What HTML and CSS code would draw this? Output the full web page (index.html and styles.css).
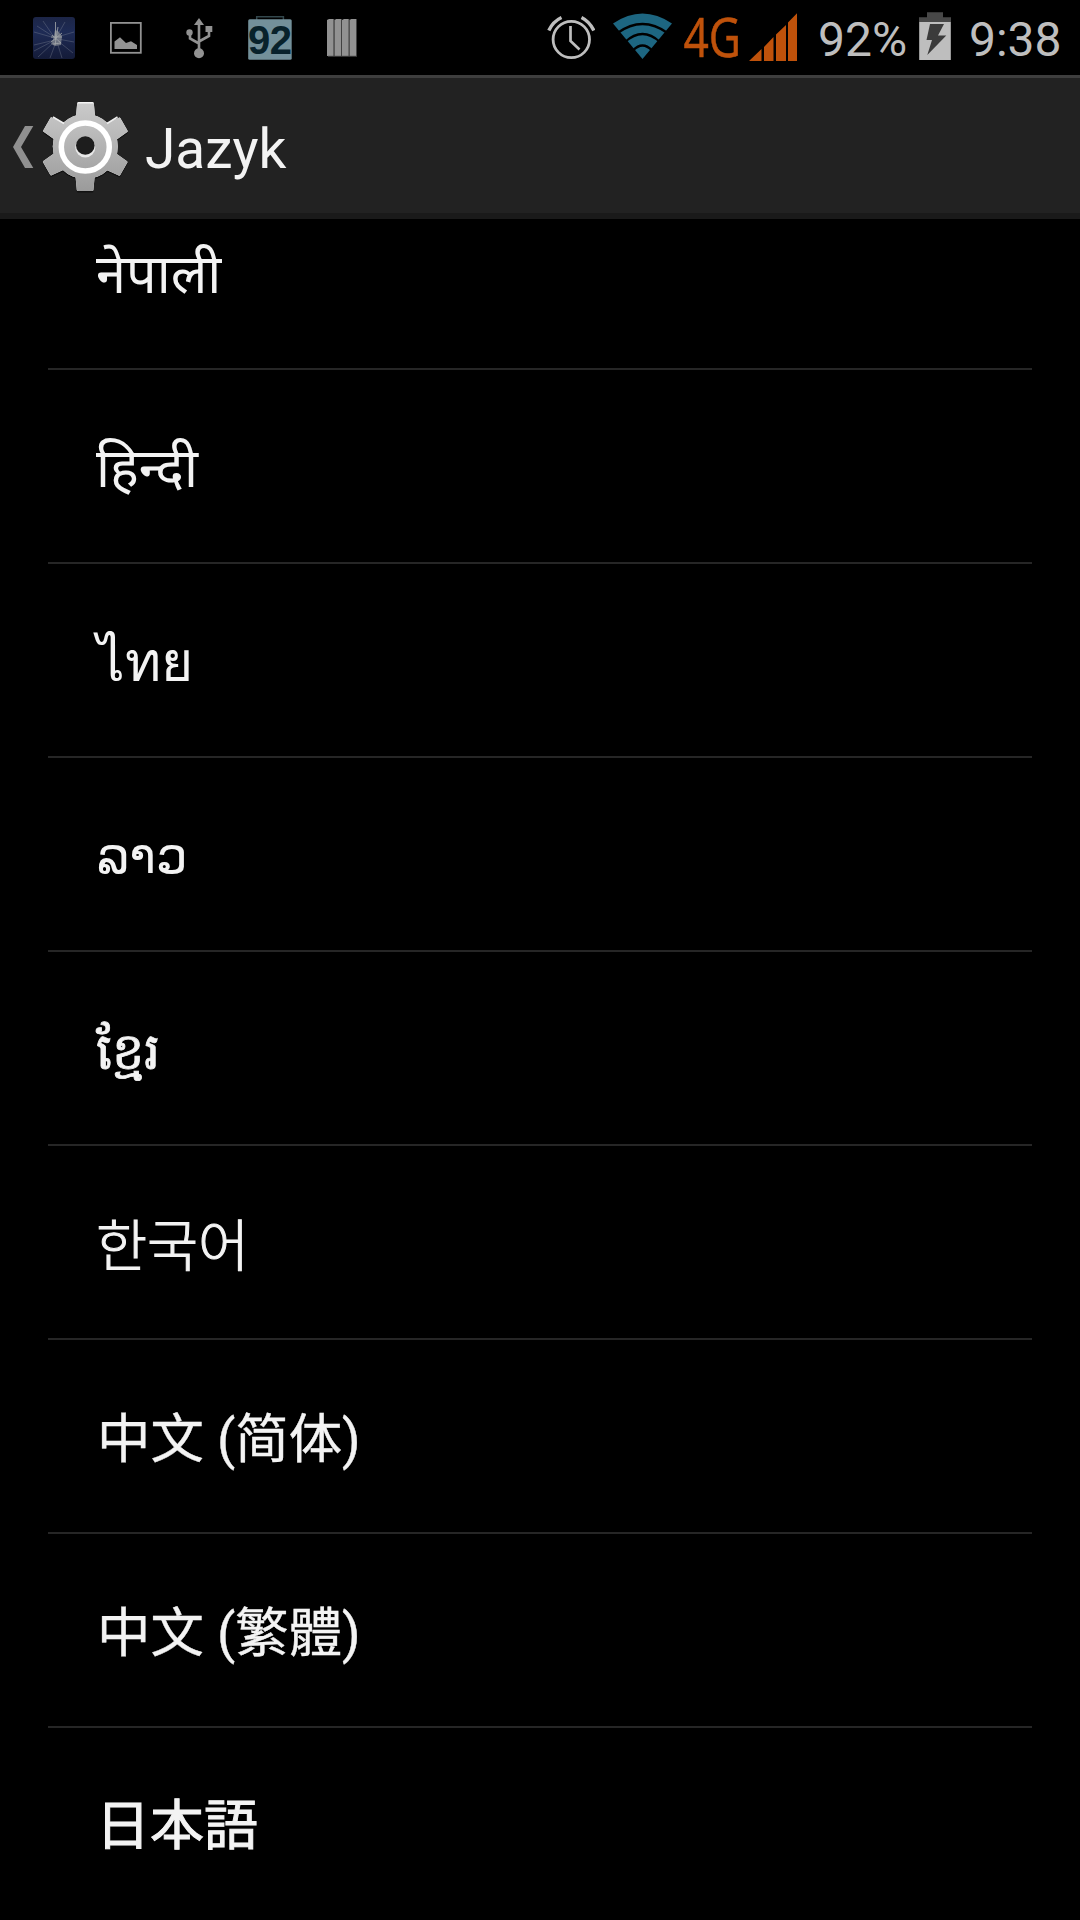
FILE: index.html
```html
<!DOCTYPE html>
<html lang="cs">
<head>
<meta charset="utf-8">
<title>Jazyk</title>
<link rel="stylesheet" href="styles.css">
</head>
<body>
<div class="status">
  <div class="notifications">
    <svg width="42" height="75" viewBox="33 0 42 75">
      <defs><linearGradient id="sky" x2="0" y2="1"><stop offset="0" stop-color="#1c2546"/><stop offset=".35" stop-color="#1e2b55"/><stop offset="1" stop-color="#141b38"/></linearGradient></defs>
      <rect x="33" y="17" width="42" height="42" rx="3" fill="url(#sky)"/>
      <path d="M55 38 34 32M55 40 34 45M54 42 38 57M56 42 50 58M57 42 62 58M58 41 73 53M58 39 74 42M57 37 74 32M57 36 65 22M54 37 43 21M54 37 37 26M53 41 34 51" stroke="#8d94a0" stroke-width=".6" opacity=".55"/>
      <path d="M55 30l3 1 4 5-1 9-6 1-4-2 2-4z" fill="#8b9095" opacity=".7"/>
      <path d="M55.500 22v18M52 35l9 8M62 33l-11 9M58 27l-3 18M51 37h11M53 44l8-1" stroke="#a4a8ab" stroke-width=".8"/>
    </svg>
    <svg width="32" height="75" viewBox="110 0 32 75">
      <rect x="110.900" y="22.900" width="29.900" height="29.900" fill="none" stroke="#929292" stroke-width="1.800"/>
      <path d="M114.500 49V41.500L120 37.200 126 43 131 41.200 137 45V49Z" fill="#929292"/>
    </svg>
    <svg width="27" height="75" viewBox="186 0 27 75">
      <path d="M199 52V23M199 43.500 190 38.500V33M199 41.500 209 36V30" fill="none" stroke="#929292" stroke-width="2.600"/>
      <path d="M199 18 204 25H194Z" fill="#929292"/>
      <circle cx="199" cy="53.200" r="5" fill="#929292"/><circle cx="189.500" cy="32.500" r="3.200" fill="#929292"/>
      <rect x="205.500" y="26" width="6.800" height="6" fill="#929292"/>
    </svg>
    <svg width="44" height="75" viewBox="248 0 44 75">
      <path d="M256.700 20V16.700H283.400V20" fill="none" stroke="#33474c" stroke-width="1.500"/>
      <rect x="248.200" y="19.200" width="43.500" height="40.500" rx="1.500" fill="#73909a"/>
      <text class="badge" x="248" y="53.500" textLength="44">92</text>
    </svg>
    <svg width="30" height="75" viewBox="327 0 30 75">
      <path d="M327 20l2-1h5v37h-7zM334.300 20l2-1h5v37h-7zM342 20l2-1h5v37h-7zM349.300 20l2-1h5.300v37h-7.300z" fill="#929292"/>
      <path d="M333.900 19v37M341.500 19v37M349 19v37M356.500 19v37M328 56.300h29" stroke="#424242" stroke-width="1"/>
    </svg>
  </div>
  <div class="system">
    <svg width="48" height="75" viewBox="547 0 48 75">
      <g fill="none" stroke="#bebebe"><circle cx="571.300" cy="39.500" r="18.200" stroke-width="2.800"/>
      <path d="M548.800 30.500Q553 21.500 561.500 17.500M593.800 30.500Q589.500 21.500 581.500 17.500" stroke-width="3.400"/>
      <path d="M570.500 26V41L579.500 49.500" stroke-width="2.700"/></g>
    </svg>
    <svg width="59" height="75" viewBox="613 0 59 75">
      <path d="M613 23.500Q642.500 3.500 672 23.500L642.500 59Z" fill="#1d6681"/>
      <path d="M617.500 33Q642.500 15 667.500 33M625 42Q642.500 26 660 42M633 50.500Q642.500 40.500 652 50.500" fill="none" stroke="#000" stroke-width="2.300"/>
    </svg>
    <svg class="data" width="64" height="75" viewBox="680 0 64 75">
      <text class="network" x="683.500" y="57" textLength="57.500" lengthAdjust="spacingAndGlyphs">4G</text>
    </svg>
    <svg class="signal" width="49" height="75" viewBox="749 0 49 75">
      <path d="M749 61 761.500 49V61ZM764 47 773.500 37V61H764ZM776 34.500 786 25V61H776ZM788 22.500 797 13.300V61H788Z" fill="#bf520b"/>
    </svg>
    <span class="percent">92%</span>
    <svg width="32" height="75" viewBox="919 0 32 75">
      <path d="M927 12.300H943V17.300H951V22H919V17.300H927Z" fill="#484848"/>
      <rect x="919.200" y="22" width="31.600" height="38" fill="#bebebe"/>
      <path d="M930 24H944L938 35.500H946.300L927.300 55 932 40H926.500Z" fill="#3b3b3b"/>
    </svg>
    <span class="clock">9:38</span>
  </div>
</div>
<header class="bar">
  <svg width="145" height="135" viewBox="0 78 145 135">
    <defs>
      <linearGradient id="metal" gradientUnits="userSpaceOnUse" x1="0" y1="102" x2="0" y2="191"><stop offset="0" stop-color="#cbcbcb"/><stop offset="1" stop-color="#9b9b9b"/></linearGradient>
      <g id="teeth"><path id="tooth" d="M75.500 121 77.200 103Q77.300 102 78.500 102H92.500Q93.700 102 93.800 103L95.500 121Z"/>
      <use href="#tooth" transform="rotate(60 85.300 146.500)"/><use href="#tooth" transform="rotate(120 85.300 146.500)"/><use href="#tooth" transform="rotate(180 85.300 146.500)"/><use href="#tooth" transform="rotate(240 85.300 146.500)"/><use href="#tooth" transform="rotate(300 85.300 146.500)"/>
      <circle cx="85.300" cy="146.500" r="32.500"/></g>
      <mask id="body"><rect y="78" width="146" height="135" fill="#000"/><use href="#teeth" fill="#fff"/></mask>
    </defs>
    <path d="M25 126H33.300L21 147 33.300 168H25L13 147Z" fill="#909090"/>
    <use href="#teeth" fill="#111" transform="translate(0 1.500)"/>
    <use href="#teeth" fill="#f4f4f4"/>
    <g mask="url(#body)"><rect x="30" y="103.500" width="110" height="100" fill="url(#metal)"/></g>
    <path d="M53 117 64 123.500M117.500 117 107 123.500" stroke="#eee" stroke-width="1.500"/>
    <circle cx="85.300" cy="147" r="24" fill="none" stroke="#fff" stroke-width="5.500"/>
    <circle cx="85.300" cy="147.500" r="10" fill="#e8e8e8"/>
    <circle cx="85.300" cy="145.500" r="9.300" fill="#1d1d1d"/>
  </svg>
  <h1>Jazyk</h1>
</header>
<main class="viewport">
  <ul class="languages">
    <li lang="ne">नेपाली</li>
    <li lang="hi">हिन्दी</li>
    <li lang="th">ไทย</li>
    <li lang="lo">ລາວ</li>
    <li lang="km">ខ្មែរ</li>
    <li lang="ko">한국어</li>
    <li lang="zh-Hans">中文 (简体)</li>
    <li lang="zh-Hant">中文 (繁體)</li>
    <li lang="ja">日本語</li>
  </ul>
</main>
</body>
</html>
```
FILE: styles.css
```css
* { box-sizing: border-box; }
body {
  margin: 0;
  width: 1080px;
  height: 1920px;
  overflow: hidden;
  display: flex;
  flex-direction: column;
  background: #000;
  color: #f3f3f3;
  font-family: Roboto, "Noto Sans", sans-serif;
}
svg { display: block; flex: none; }
.status { height: 75px; flex: none; display: flex; padding-left: 33px; justify-content: space-between; }
.notifications { display: flex; }
.notifications svg + svg { margin-left: 35px; }
.notifications svg:nth-child(3) { margin-left: 44px; }
.system { display: flex; width: 533px; color: #bebebe; font-size: 48px; line-height: 79px; white-space: nowrap; }
.system svg:nth-child(2) { margin-left: 18px; }
.system svg:nth-child(3) { margin-left: 8px; }
.data { overflow: visible; }
.signal { margin-left: 5px; }
.percent { width: 101px; margin-left: 20px; }
.clock { margin-left: 18px; }
.badge { font: bold 40px "Liberation Sans", sans-serif; fill: #08222b; }
.network { font: 55px "Open Sans", sans-serif; fill: #bf520b; stroke: #bf520b; stroke-width: 0.6px; }
.bar {
  height: 144px;
  flex: none;
  display: flex;
  background: #222;
  border-top: 3px solid #3e3e3e;
  border-bottom: 6px solid #1a1a1a;
}
h1 { margin: 0; font-size: 55px; font-weight: 400; line-height: 143px; height: 135px; }
.viewport { flex: 1; overflow: hidden; padding: 0 48px; }
/* the list is scrolled so its first row sits partly under the bar */
.languages { margin: -43px 0 0; padding: 0; list-style: none; }
.languages li {
  height: 194px;
  padding-left: 48px;
  border-bottom: 2px solid #262626;
  font-size: 54px;
  line-height: 197px;
  white-space: nowrap;
}
.languages :lang(th) { padding-left: 49px; font-size: 55px; }
.languages :lang(lo) { padding-left: 49px; font-size: 50px; }
.languages :lang(km) { font-size: 51px; line-height: 199px; -webkit-text-stroke: 0.8px #f3f3f3; }
.languages :lang(ko) {
  font-family: Roboto, "Noto Sans CJK KR", sans-serif;
  font-size: 55.5px;
  font-weight: 300;
  line-height: 203px;
  -webkit-text-stroke: 1px #f3f3f3;
}
.languages :lang(zh-Hans),
.languages :lang(zh-Hant) { padding-left: 49px; font-size: 53.4px; line-height: 199px; -webkit-text-stroke: 0.4px #f3f3f3; }
.languages :lang(zh-Hans) { font-family: Roboto, "Noto Sans CJK SC", sans-serif; }
.languages :lang(zh-Hant) { font-family: Roboto, "Noto Sans CJK TC", sans-serif; }
.languages :lang(ja) { font-family: Roboto, "Noto Sans CJK JP", sans-serif; -webkit-text-stroke: 1px #f3f3f3; }
```
